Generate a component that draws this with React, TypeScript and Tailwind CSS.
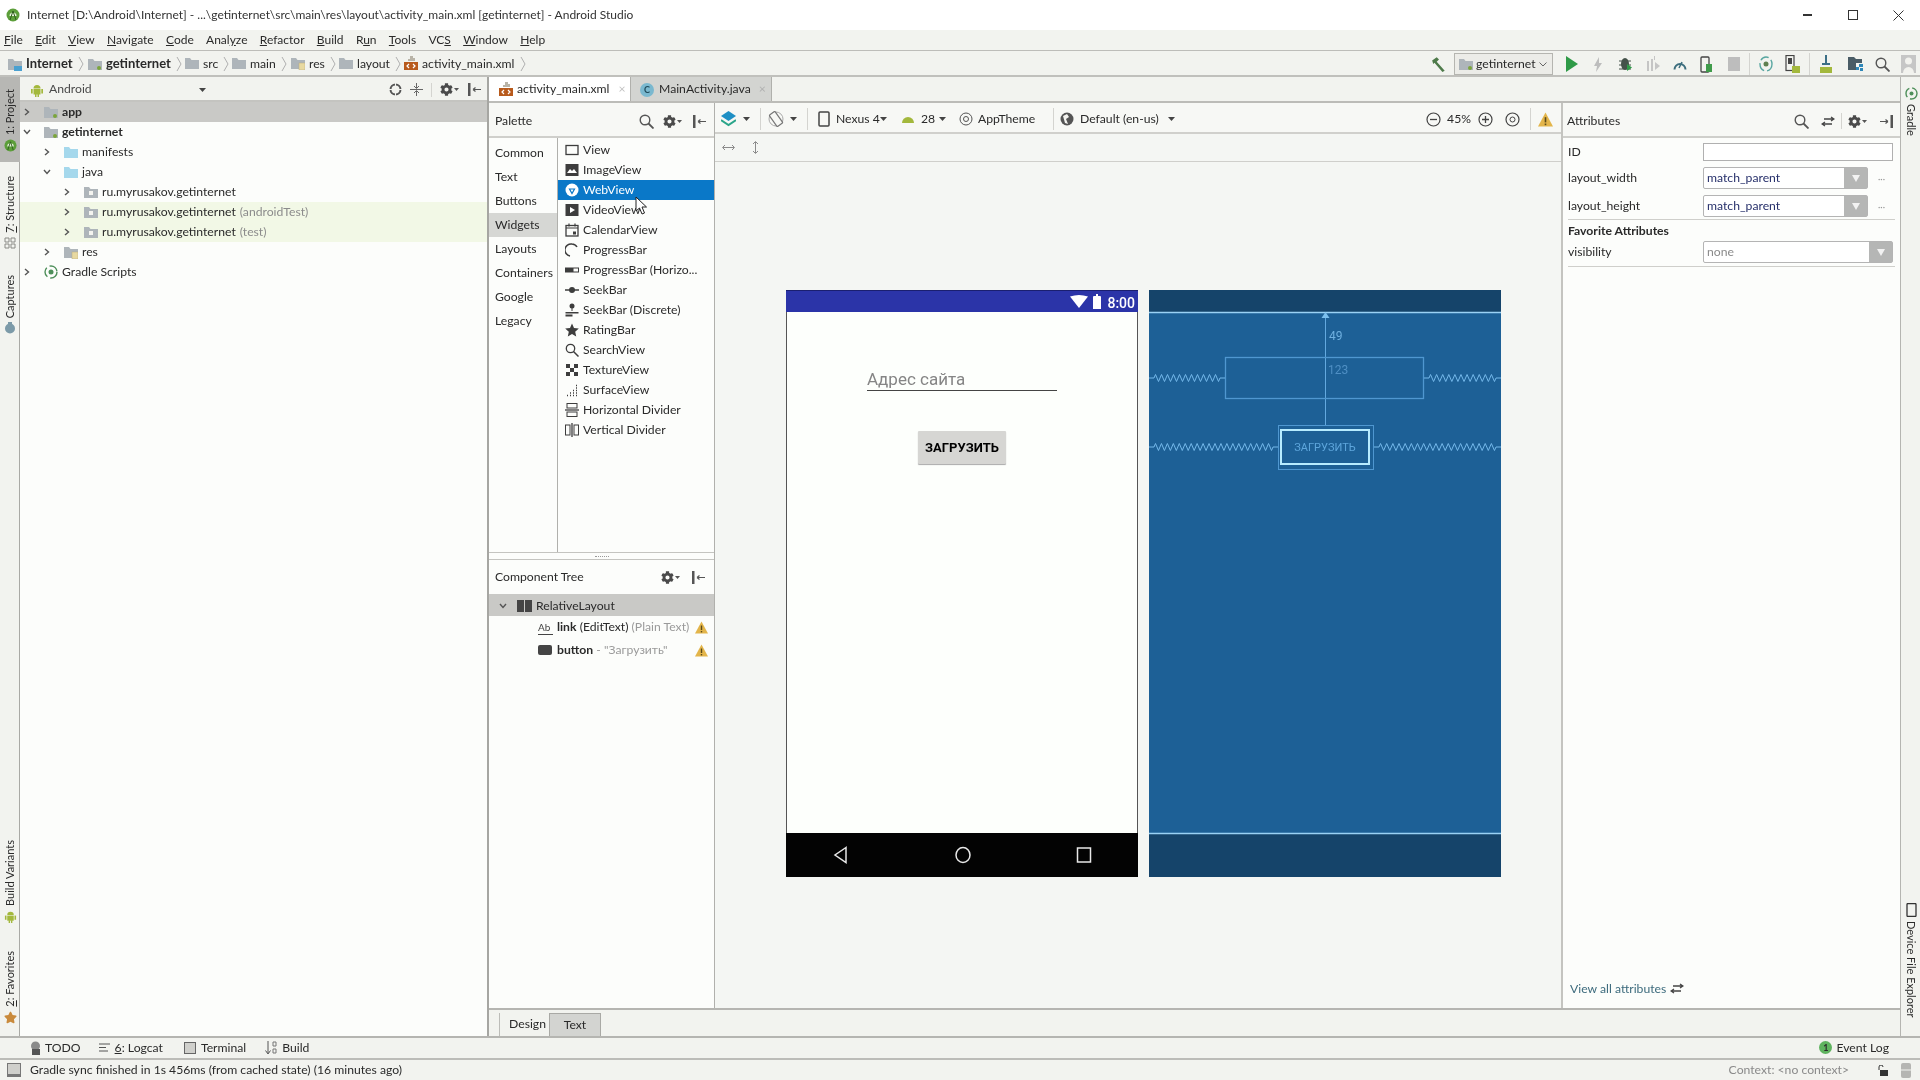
import type { ReactNode } from 'react'
import { FaCog, FaStar } from 'react-icons/fa'

const Logo = ({ size = 14 }: { size?: number }) => (
  <svg width={size} height={size} viewBox="0 0 14 14">
    <circle cx="7" cy="7" r="6.5" fill="#5c9e3a" />
    <path d="M3.5 8a3.5 3.5 0 0 1 7 0z" fill="#e8f3dd" />
    <path d="M4 12l3-9 3 9" stroke="#2f5f1e" strokeWidth="1" fill="none" />
  </svg>
)

const Magnifier = ({ size = 15 }: { size?: number }) => (
  <svg width={size} height={size} viewBox="0 0 15 15" className="shrink-0">
    <circle cx="6" cy="6" r="4.800" fill="none" stroke="#555" strokeWidth="1.400" />
    <path d="M9.500 9.500l5 5" stroke="#555" strokeWidth="1.800" />
  </svg>
)

const Folder = ({ kind = 'gray' }: { kind?: 'gray' | 'blue' | 'module' | 'pkg' | 'res' | 'root' }) => {
  const fill = kind === 'blue' ? '#a5d8ec' : '#aeb5ba'
  return (
    <svg width="14" height="13" viewBox="0 0 14 13" className="shrink-0">
      <path d="M0 1h5l1.5 2H14v9H0z" fill={fill} />
      {kind === 'pkg' && <rect x="5" y="5" width="4" height="4" fill="#f4f4f0" />}
      {kind === 'module' && <rect x="9" y="8" width="4" height="4" rx="2" fill="#7ba53c" />}
      {kind === 'res' && <rect x="8" y="6" width="6" height="7" fill="#e8d9a0" stroke="#b8ab80" strokeWidth="0.5" />}
      {kind === 'root' && <path d="M6 8h8v5H6z" fill="#4aa0d0" />}
    </svg>
  )
}

const XmlIcon = () => (
  <svg width="14" height="15" viewBox="0 0 14 15" className="shrink-0">
    <path d="M6 0h3v2h2v3H4V3h2z" fill="#b9b4a8" />
    <rect x="0" y="6" width="14" height="8" fill="#b85a1c" />
    <path d="M5 8l-2 2 2 2M9 8l2 2-2 2" stroke="#fff" strokeWidth="1.2" fill="none" />
  </svg>
)

const Robot = ({ size = 14, className = '' }: { size?: number; className?: string }) => (
  <svg width={size} height={size} viewBox="0 0 14 14" className={className}>
    <path d="M3.5 5.5a3.5 3.5 0 0 1 7 0z" fill="#a3b83c" />
    <rect x="3.5" y="6" width="7" height="5.5" fill="#a3b83c" />
    <rect x="1" y="6" width="1.7" height="4.5" fill="#a3b83c" />
    <rect x="11.3" y="6" width="1.7" height="4.5" fill="#a3b83c" />
    <rect x="5" y="11" width="1.5" height="3" fill="#a3b83c" />
    <rect x="7.5" y="11" width="1.5" height="3" fill="#a3b83c" />
  </svg>
)

const Gear = () => (
  <span className="flex items-center gap-[1px]">
    <FaCog size={13} color="#4a4a4a" />
    <svg width="5" height="3" viewBox="0 0 5 3"><path d="M0 0h5L2.500 3z" fill="#555" /></svg>
  </span>
)

const Caret = ({ className = '' }: { className?: string }) => (
  <svg width="7" height="4" viewBox="0 0 7 4" className={className}><path d="M0 0h7L3.500 4z" fill="#444" /></svg>
)

const Hide = () => (
  <svg width="13" height="13" viewBox="0 0 13 13">
    <rect x="0" y="0" width="2.500" height="13" fill="#555" />
    <path d="M5 6.500h8M5 6.500l2.500-2M5 6.500l2.500 2" stroke="#555" strokeWidth="1.200" fill="none" />
  </svg>
)

const Chevron = ({ open = false }: { open?: boolean }) => (
  <svg width="8" height="8" viewBox="0 0 8 8" className="shrink-0">
    <path d={open ? 'M1 2l3 3.500L7 2' : 'M2 1l3.500 3L2 7'} stroke="#555" strokeWidth="1.400" fill="none" />
  </svg>
)

const Warn = ({ size = 13 }: { size?: number }) => (
  <svg width={size} height={size} viewBox="0 0 13 13">
    <path d="M6.500 0.500L13 12.500H0z" fill="#e3b54a" />
    <rect x="5.800" y="4.500" width="1.400" height="4.500" fill="#5a4a1a" />
    <rect x="5.800" y="10" width="1.400" height="1.400" fill="#5a4a1a" />
  </svg>
)

const Swap = () => (
  <svg width="14" height="11" viewBox="0 0 14 11">
    <path d="M3 3h9M10 1l3 2-3 2M11 8H2M4 6L1 8l3 2" stroke="#444" strokeWidth="1.300" fill="none" />
  </svg>
)

const Crumb = ({ icon, label, bold, w }: { icon: ReactNode; label: string; bold?: boolean; w: number }) => (
  <div className="flex items-center shrink-0" style={{ width: w }}>
    {icon}
    <span className={`ml-[4px] ${bold ? 'font-bold text-[13px]' : ''}`}>{label}</span>
    <svg width="6" height="16" viewBox="0 0 6 16" className="ml-[5px]">
      <path d="M1 1l4 7-4 7" stroke="#b0b0b0" fill="none" />
    </svg>
  </div>
)

const MENU: [string, string, string][] = [
  ['', 'F', 'ile'], ['', 'E', 'dit'], ['', 'V', 'iew'], ['', 'N', 'avigate'], ['', 'C', 'ode'],
  ['Anal', 'y', 'ze'], ['', 'R', 'efactor'], ['', 'B', 'uild'], ['R', 'u', 'n'], ['', 'T', 'ools'],
  ['VC', 'S', ''], ['', 'W', 'indow'], ['', 'H', 'elp'],
]

const TREE = [
  { depth: 0, label: 'app', bold: true, icon: 'module', selected: true },
  { depth: 0, label: 'getinternet', bold: true, icon: 'module', open: true },
  { depth: 1, label: 'manifests', icon: 'blue' },
  { depth: 1, label: 'java', icon: 'blue', open: true },
  { depth: 2, label: 'ru.myrusakov.getinternet', icon: 'pkg' },
  { depth: 2, label: 'ru.myrusakov.getinternet', icon: 'pkg', note: '(androidTest)', tint: true },
  { depth: 2, label: 'ru.myrusakov.getinternet', icon: 'pkg', note: '(test)', tint: true },
  { depth: 1, label: 'res', icon: 'res' },
  { depth: 0, label: 'Gradle Scripts', icon: 'gradle' },
]

const GROUPS = ['Common', 'Text', 'Buttons', 'Widgets', 'Layouts', 'Containers', 'Google', 'Legacy']

const PALETTE_ICONS: Record<string, ReactNode> = {
  View: <rect x="1" y="2.500" width="12" height="9" fill="none" stroke="currentColor" strokeWidth="1.300" />,
  ImageView: (
    <>
      <rect x="0.500" y="1" width="13" height="12" fill="currentColor" />
      <path d="M2 10l3-4 2 2 2-2 3 4z" fill="#fff" />
    </>
  ),
  WebView: (
    <>
      <circle cx="7" cy="7" r="6.500" fill="currentColor" />
      <path d="M4.500 6h5L7 10.500z" fill="none" stroke="#0a78c8" strokeWidth="1.200" />
    </>
  ),
  VideoView: (
    <>
      <rect x="0.500" y="1" width="13" height="12" fill="currentColor" />
      <path d="M5 4l5 3-5 3z" fill="#fff" />
    </>
  ),
  CalendarView: (
    <>
      <rect x="1" y="2.500" width="12" height="10.500" fill="none" stroke="currentColor" strokeWidth="1.300" />
      <path d="M4 0.500v3M10 0.500v3M1 5h12" stroke="currentColor" strokeWidth="1.200" />
      <rect x="8" y="8.500" width="3" height="3" fill="currentColor" />
    </>
  ),
  ProgressBar: <path d="M5 13A6 6 0 0 1 7 1a6 6 0 0 1 5 3" fill="none" stroke="currentColor" strokeWidth="1.500" />,
  Horizontal: (
    <>
      <rect x="0.500" y="5" width="13" height="4" fill="none" stroke="currentColor" />
      <rect x="0.500" y="5" width="8" height="4" fill="currentColor" />
    </>
  ),
  SeekBar: (
    <>
      <path d="M0 7h14" stroke="currentColor" strokeWidth="1.500" />
      <circle cx="7" cy="7" r="3" fill="currentColor" />
    </>
  ),
  Discrete: (
    <>
      <circle cx="7" cy="3" r="2.500" fill="currentColor" />
      <path d="M7 5v3" stroke="currentColor" />
      <rect x="0.500" y="9" width="13" height="1.500" fill="currentColor" />
      <rect x="0.500" y="11.500" width="7" height="2" fill="currentColor" />
    </>
  ),
  RatingBar: <path d="M7 0.500l2 4.500 4.800 0.500-3.600 3.200 1 4.800L7 11l-4.200 2.500 1-4.800L0.200 5.500 5 5z" fill="currentColor" />,
  SearchView: (
    <>
      <circle cx="5.500" cy="5.500" r="4.200" fill="none" stroke="currentColor" strokeWidth="1.300" />
      <path d="M8.500 8.500l5 5" stroke="currentColor" strokeWidth="1.500" />
    </>
  ),
  TextureView: (
    <>
      <rect x="1" y="1" width="4" height="4" fill="currentColor" />
      <rect x="9" y="1" width="4" height="4" fill="currentColor" />
      <rect x="5" y="5" width="4" height="4" fill="currentColor" />
      <rect x="1" y="9" width="4" height="4" fill="currentColor" />
      <rect x="9" y="9" width="4" height="4" fill="currentColor" />
    </>
  ),
  SurfaceView: <path d="M2 12.500h1M5 12.500h1M8 12.500h1M11 12.500h1M5 10h1M8 10h1M11 10h1M8 7.500h1M11 7.500h1M11 5h1M11 2.500h1" stroke="currentColor" strokeWidth="1.500" />,
  HDivider: (
    <>
      <rect x="2" y="0.500" width="10" height="4.500" fill="none" stroke="currentColor" />
      <path d="M0 7h14" stroke="currentColor" strokeWidth="1.300" />
      <rect x="2" y="9" width="10" height="4.500" fill="none" stroke="currentColor" />
    </>
  ),
  VDivider: (
    <>
      <rect x="0.500" y="2" width="4.500" height="10" fill="none" stroke="currentColor" />
      <path d="M7 0v14" stroke="currentColor" strokeWidth="1.300" />
      <rect x="9" y="2" width="4.500" height="10" fill="none" stroke="currentColor" />
    </>
  ),
}

const WIDGETS = [
  ['View', 'View'], ['ImageView', 'ImageView'], ['WebView', 'WebView'], ['VideoView', 'VideoView'],
  ['CalendarView', 'CalendarView'], ['ProgressBar', 'ProgressBar'], ['Horizontal', 'ProgressBar (Horizo...'],
  ['SeekBar', 'SeekBar'], ['Discrete', 'SeekBar (Discrete)'], ['RatingBar', 'RatingBar'],
  ['SearchView', 'SearchView'], ['TextureView', 'TextureView'], ['SurfaceView', 'SurfaceView'],
  ['HDivider', 'Horizontal Divider'], ['VDivider', 'Vertical Divider'],
]

const Side = ({ label, icon, flip = true, className = '' }: { label: ReactNode; icon: ReactNode; flip?: boolean; className?: string }) => (
  <div className={`flex flex-col items-center w-[20px] text-[11px] ${className}`}>
    {flip ? (
      <>
        <span className="[writing-mode:vertical-rl] rotate-180 leading-[20px] whitespace-nowrap">{label}</span>
        <span className="mt-[4px]">{icon}</span>
      </>
    ) : (
      <>
        <span className="mb-[4px]">{icon}</span>
        <span className="[writing-mode:vertical-rl] leading-[20px] whitespace-nowrap">{label}</span>
      </>
    )}
  </div>
)

const Box = ({ w = 27, children }: { w?: number; children: ReactNode }) => (
  <div className="flex justify-center items-center shrink-0" style={{ width: w }}>{children}</div>
)

const Sep = ({ className = '' }: { className?: string }) => <div className={`w-px h-[22px] bg-[#d4d4d0] shrink-0 ${className}`} />

// zigzag between two straight stubs
const spring = (x1: number, x2: number, y: number) => {
  const pts: string[] = [`${x1},${y}`, `${x1 + 5},${y}`]
  const span = x2 - x1 - 10
  const n = Math.round(span / 3) & ~1
  for (let i = 0; i < n; i++) pts.push(`${x1 + 5 + ((i + 0.500) * span) / n},${y + (i % 2 ? 3.500 : -3.500)}`)
  pts.push(`${x2 - 5},${y}`, `${x2},${y}`)
  return pts.join(' ')
}

const Blueprint = () => (
  <svg width="352" height="587" viewBox="0 0 352 587" className="shrink-0 block">
    <rect width="352" height="587" fill="#1d6096" />
    <rect width="352" height="22" fill="#15446a" />
    <rect y="543" width="352" height="44" fill="#15446a" />
    <path d="M0 22.500h352M0 543.500h352" stroke="#9ad2f5" strokeWidth="1.500" />
    <path d="M176.500 24v111" stroke="#63a9df" />
    <path d="M176.500 22l-4 6h8z" fill="#7cc0ee" />
    <rect x="76.500" y="67.500" width="198" height="41" fill="none" stroke="#4f97d0" strokeWidth="1.300" />
    <rect x="129.500" y="135.500" width="95" height="44" fill="none" stroke="#4f97d0" />
    <rect x="132" y="140" width="88" height="34" fill="none" stroke="#b7ecff" strokeWidth="2" />
    <polyline points={spring(0, 76, 88)} fill="none" stroke="#74b8ea" />
    <polyline points={spring(275, 352, 88)} fill="none" stroke="#74b8ea" />
    <polyline points={spring(0, 129, 157)} fill="none" stroke="#74b8ea" />
    <polyline points={spring(225, 352, 157)} fill="none" stroke="#74b8ea" />
    <text x="180" y="50" fontSize="12" fill="#6fb0e0" fontFamily="Roboto, sans-serif">49</text>
    <text x="179" y="84" fontSize="12" fill="#4f8fc4" fontFamily="Roboto, sans-serif">123</text>
    <text x="176" y="161" fontSize="11" textAnchor="middle" fill="#5ea6dc" fontFamily="Roboto, sans-serif">ЗАГРУЗИТЬ</text>
  </svg>
)

const Phone = () => (
  <div className="w-[352px] h-[587px] flex flex-col shrink-0 font-['Roboto',sans-serif]">
    <div className="h-[22px] bg-[#2b34a8] border-t border-[#1a1f70] flex items-center justify-end pr-[3px] text-white">
      <svg width="18" height="13" viewBox="0 0 18 13" className="mr-[4px]"><path d="M0 1.500Q9-1.500 18 1.500L9 13z" fill="#fff" /></svg>
      <svg width="10" height="15" viewBox="0 0 10 15" className="mr-[5px]"><path d="M2 2h2V0h2v2h2a1 1 0 0 1 1 1v12H1V3a1 1 0 0 1 1-1z" fill="#fff" /></svg>
      <span className="text-[14px] font-medium leading-none mt-[2px]">8:00</span>
    </div>
    <div className="flex-1 bg-[#fdfffc] border-x border-[#555] flex flex-col items-center">
      <div className="w-[190px] mt-[56px] h-[23px] border-b border-[#444] text-[17px] leading-[22px] text-[#858585]">Адрес сайта</div>
      <div className="mt-[40px] w-[88px] h-[33px] bg-[#d6d6d3] shadow-[0_1px_1px_#aaa] flex items-center justify-center text-[13px] font-bold text-black rounded-[1px]">ЗАГРУЗИТЬ</div>
    </div>
    <div className="h-[44px] bg-[#030303] flex items-center justify-between pl-[47px] pr-[46px]">
      <svg width="16" height="18" viewBox="0 0 16 18"><path d="M13 1.500L2 9l11 7.500z" fill="none" stroke="#e8e8e8" strokeWidth="1.500" /></svg>
      <svg width="16" height="18" viewBox="0 0 16 18"><ellipse cx="8" cy="9" rx="7" ry="7.500" fill="none" stroke="#e8e8e8" strokeWidth="1.500" /></svg>
      <svg width="16" height="18" viewBox="0 0 16 18"><rect x="1.500" y="2" width="13" height="14" fill="none" stroke="#e8e8e8" strokeWidth="1.500" /></svg>
    </div>
  </div>
)

const Select = ({ value, dim, wide }: { value: string; dim?: boolean; wide?: boolean }) => (
  <div className={`h-[22px] flex border border-[#b4b4b4] rounded-[2px] bg-white ${wide ? 'w-[190px]' : 'w-[165px]'}`}>
    <div className={`flex-1 pl-[3px] leading-[20px] ${dim ? 'text-[#8a8a8a]' : 'text-[#27306b]'}`}>{value}</div>
    <div className="w-[23px] bg-[#b5b6b5] flex items-center justify-center">
      <svg width="8" height="8" viewBox="0 0 8 8"><path d="M0 1h8L4 8z" fill="#f2f2f2" /></svg>
    </div>
  </div>
)

const Field = ({ label, children }: { label: string; children: ReactNode }) => (
  <div className="flex items-center">
    <span className="w-[140px] shrink-0 pl-[5px]">{label}</span>
    {children}
  </div>
)

export default function App() {
  return (
    <div className="w-[1920px] h-[1080px] overflow-hidden flex flex-col bg-[#f2f3ef] text-[12.2px] text-[#2a2a2a] font-['Lato',sans-serif] blur-[0.35px]">
      {/* window title */}
      <div className="h-[30px] bg-white flex items-center pl-[6px] text-[#333] text-[12px]">
        <Logo />
        <span className="ml-[7px] whitespace-nowrap">Internet [D:\Android\Internet] - ...\getinternet\src\main\res\layout\activity_main.xml [getinternet] - Android Studio</span>
        <div className="ml-auto flex items-center">
          <Box w={46}><div className="w-[9px] h-[1.500px] bg-[#333]" /></Box>
          <Box w={46}><div className="w-[10px] h-[10px] border border-[#333]" /></Box>
          <Box w={44}>
            <svg width="11" height="11" viewBox="0 0 11 11"><path d="M0.500 0.500l10 10M10.500 0.500l-10 10" stroke="#333" /></svg>
          </Box>
        </div>
      </div>

      {/* menu */}
      <div className="h-[21px] flex items-center gap-[12.3px] pl-[4px] border-b border-[#bdbdb9] text-[12px]">
        {MENU.map(([a, m, b]) => (
          <span key={a + m + b}>{a}<span className="underline">{m}</span>{b}</span>
        ))}
      </div>

      {/* navigation bar */}
      <div className="h-[26px] flex items-center pl-[8px] pt-[2px] border-b-2 border-[#c0c0bc] shrink-0">
        <Crumb bold w={80} label="Internet" icon={<Folder kind="root" />} />
        <Crumb bold w={97} label="getinternet" icon={<Folder kind="module" />} />
        <Crumb w={47} label="src" icon={<Folder />} />
        <Crumb w={59} label="main" icon={<Folder />} />
        <Crumb w={48} label="res" icon={<Folder kind="res" />} />
        <Crumb w={65} label="layout" icon={<Folder />} />
        <Crumb w={125} label="activity_main.xml" icon={<XmlIcon />} />
        <div className="ml-auto flex items-center">
          <Box>
            <svg width="16" height="16" viewBox="0 0 14 14"><path d="M1 4l4-3 2 2-2 2 7 8-2 1-7-8-1 1z" fill="#4e7a4a" /></svg>
          </Box>
          <div className="ml-[2px] w-[99px] h-[22px] border border-[#b5b5b0] bg-[#ecece8] flex items-center pl-[4px] gap-[3px]">
            <Folder kind="module" />
            <span>getinternet</span>
            <svg width="8" height="5" viewBox="0 0 8 5"><path d="M0.500 0.500L4 4l3.500-3.500" stroke="#666" fill="none" /></svg>
          </div>
          <div className="ml-[5px] flex">
            <Box><svg width="12" height="16" viewBox="0 0 12 16"><path d="M0 0l12 8-12 8z" fill="#2f9a47" /></svg></Box>
            <Box><svg width="9" height="15" viewBox="0 0 9 15"><path d="M5 0L0 9h3l-1 6 6-9H5z" fill="#bdbdbd" /></svg></Box>
            <Box><svg width="14" height="16" viewBox="0 0 14 16"><ellipse cx="6" cy="8" rx="4" ry="6" fill="#44524a" /><path d="M0 5h12M0 9h12M0 13h12" stroke="#44524a" /><path d="M8 8l5 3.500-5 3.500z" fill="#2f9a47" /></svg></Box>
            <Box><svg width="14" height="16" viewBox="0 0 14 16"><path d="M1 5h2v10H1zM5 3h2v12H5zM8 0h1v4H8z" fill="#c5c5c5" /><path d="M9 6l5 4-5 4z" fill="#c5c5c5" /></svg></Box>
            <Box><svg width="14" height="11" viewBox="0 0 14 11"><path d="M1.500 10.500a5.500 5.500 0 1 1 11 0" stroke="#3d6e7e" strokeWidth="2" fill="none" /><path d="M6 9l3-6" stroke="#3d6e7e" strokeWidth="1.500" /></svg></Box>
            <Box><svg width="13" height="17" viewBox="0 0 13 17"><rect x="1" y="1" width="8" height="15" rx="1" fill="none" stroke="#444" strokeWidth="1.300" /><rect x="6" y="8" width="6" height="8" fill="#3f9b4a" /></svg></Box>
            <Box><div className="w-[12px] h-[14px] bg-[#bdbdbd]" /></Box>
          </div>
          <Sep className="ml-[2px]" />
          <div className="ml-[2px] flex">
            <Box><svg width="14" height="18" viewBox="0 0 14 18"><ellipse cx="7" cy="9" rx="6" ry="7" fill="none" stroke="#58a6a0" strokeWidth="1.400" strokeDasharray="9 3" /><circle cx="7" cy="9" r="2.500" fill="#5f7f4f" /></svg></Box>
            <Box><svg width="15" height="18" viewBox="0 0 15 18"><rect x="1" y="0.500" width="8" height="15" fill="none" stroke="#444" strokeWidth="1.200" /><rect x="3" y="3" width="4" height="6" fill="#444" /><rect x="7" y="11" width="8" height="7" fill="#a3b83c" /></svg></Box>
          </div>
          <Sep className="ml-[3px]" />
          <div className="ml-[2px] flex">
            <Box><svg width="16" height="18" viewBox="0 0 16 18"><path d="M7 0h2v8h3v2H4V8h3z" fill="#3c6f86" /><rect x="2" y="12" width="12" height="6" fill="#a3b83c" /></svg></Box>
            <div className="w-[3px]" />
            <Box><svg width="16" height="14" viewBox="0 0 16 14"><path d="M0 0h6l2 2h6v4H8v7H0z" fill="#4a5c66" /><path d="M11 7h4v3h-4zM8 10h3v3H8zM12 11h3v3h-3z" fill="#2f87b8" /></svg></Box>
            <Box><Magnifier /></Box>
            <Box w={24}><svg width="15" height="18" viewBox="0 0 15 18"><rect width="15" height="18" fill="#c6c6c6" /><circle cx="7.500" cy="6" r="3.500" fill="#f2f2ee" /><path d="M2 18a5.500 6 0 0 1 11 0z" fill="#f2f2ee" /></svg></Box>
          </div>
        </div>
      </div>

      {/* body */}
      <div className="flex-1 flex min-h-0">
        {/* left tool stripe */}
        <div className="w-[20px] border-r border-[#a9a9a5] flex flex-col shrink-0">
          <Side className="bg-[#b7b7b4] h-[85px] pt-[12px]" label="1: Project" icon={<Logo size={13} />} />
          <Side className="mt-[14px]" label={<><span className="underline">7</span>: Structure</>} icon={
            <svg width="12" height="12" viewBox="0 0 12 12"><path d="M1 1h4v4H1zM7 1h4v4H7zM1 7h4v4H1zM7 7h4v4H7z" fill="none" stroke="#8a8a86" /></svg>
          } />
          <Side className="mt-[26px]" label="Captures" icon={
            <svg width="12" height="12" viewBox="0 0 12 12"><circle cx="6" cy="6.500" r="5" fill="#7c9aa8" /><rect x="4" y="0" width="4" height="2" fill="#7c9aa8" /></svg>
          } />
          <div className="flex-1" />
          <Side label="Build Variants" icon={<Robot size={13} />} />
          <Side className="mt-[28px] mb-[12px]" label={<><span className="underline">2</span>: Favorites</>} icon={<FaStar size={13} color="#c98a3c" />} />
        </div>

        {/* project pane */}
        <div className="w-[469px] shrink-0 bg-[#fcfdfb] border-r-2 border-[#a6a6a2] flex flex-col">
          <div className="h-[25px] bg-[#f2f3ef] border-b-2 border-[#c4c4c0] flex items-center pl-[10px] pt-[2px] shrink-0">
            <Robot />
            <span className="ml-[5px] text-[#4a4a4a]">Android</span>
            <Caret className="ml-[107px]" />
            <div className="ml-auto flex items-center pr-[6px]">
              <svg width="13" height="13" viewBox="0 0 13 13" className="mr-[8px]"><circle cx="6.500" cy="6.500" r="5" fill="none" stroke="#555" strokeWidth="2" /><path d="M6.500 0v13M0 6.500h13" stroke="#f2f3ef" /></svg>
              <svg width="13" height="13" viewBox="0 0 13 13"><path d="M6.500 0v5M4 3l2.500 2.500L9 3M6.500 13V8M4 10l2.500-2.500L9 10M0 6.500h13" stroke="#666" fill="none" /></svg>
              <Sep className="h-[14px]! mx-[8px]" />
              <Gear />
              <div className="ml-[9px]"><Hide /></div>
            </div>
          </div>
          {TREE.map((row, i) => (
            <div key={i} className={`h-[20px] flex items-center shrink-0 ${row.selected ? 'bg-[#c9c9c6]' : row.tint ? 'bg-[#f2f8e6]' : ''}`} style={{ paddingLeft: 3 + row.depth * 20 }}>
              <span className="w-[8px]"><Chevron open={row.open} /></span>
              <span className="ml-[13px]">
                {row.icon === 'gradle' ? (
                  <svg width="14" height="14" viewBox="0 0 14 14"><circle cx="7" cy="7" r="6" fill="none" stroke="#4e8f5a" strokeWidth="1.400" strokeDasharray="10 3" /><circle cx="7" cy="7" r="2.500" fill="#4e8f5a" /></svg>
                ) : (
                  <Folder kind={row.icon as 'gray'} />
                )}
              </span>
              <span className={`ml-[4px] ${row.bold ? 'font-bold' : ''}`}>{row.label}</span>
              {row.note && <span className="ml-[4px] text-[#8c8c8c]">{row.note}</span>}
            </div>
          ))}
        </div>

        {/* editor */}
        <div className="flex-1 min-w-0 flex flex-col relative">
          {/* file tabs */}
          <div className="h-[26px] flex border-b-2 border-[#bcbcb8] shrink-0">
            <div className="w-[141px] h-[24px] bg-white flex items-center pl-[10px] pt-[1px]">
              <XmlIcon />
              <span className="ml-[4px]">activity_main.xml</span>
              <span className="ml-[9px] text-[#c2c2c2]">×</span>
            </div>
            <div className="w-[142px] h-[24px] bg-[#d3d4d1] border-x border-[#b0b0ac] flex items-center pl-[9px] pt-[1px]">
              <span className="w-[14px] h-[14px] rounded-full bg-[#7ab8cf] flex items-center justify-center text-[9px] font-bold text-[#1f4a5a]">C</span>
              <span className="ml-[5px]">MainActivity.java</span>
              <span className="ml-[8px] text-[#b0b0b0]">×</span>
            </div>
          </div>

          <div className="flex-1 flex min-h-0">
            {/* palette and component tree */}
            <div className="w-[226px] shrink-0 bg-[#fcfdfb] border-r border-[#b0b0ac] flex flex-col">
              <div className="h-[35px] border-b-2 border-[#cfcfcb] bg-[#f7f8f5] flex items-center pl-[6px] pt-[3px] shrink-0">
                <span>Palette</span>
                <div className="ml-auto flex items-center pr-[8px]">
                  <Magnifier />
                  <div className="ml-[9px]"><Gear /></div>
                  <div className="ml-[11px]"><Hide /></div>
                </div>
              </div>
              <div className="h-[414px] flex shrink-0">
                <div className="w-[69px] border-r border-[#b0b0ac] pt-[3px] shrink-0">
                  {GROUPS.map(g => (
                    <div key={g} className={`h-[24px] flex items-center pl-[6px] ${g === 'Widgets' ? 'bg-[#d6d7d4]' : ''}`}>{g}</div>
                  ))}
                </div>
                <div className="flex-1 pt-[2px]">
                  {WIDGETS.map(([key, label]) => {
                    const sel = key === 'WebView'
                    return (
                      <div key={key} className={`h-[20px] flex items-center pl-[7px] ${sel ? 'bg-[#0a78c8] text-white' : ''}`}>
                        <svg width="14" height="14" viewBox="0 0 14 14" className={`shrink-0 ${sel ? 'text-white' : 'text-[#3d3d3d]'}`}>{PALETTE_ICONS[key]}</svg>
                        <span className="ml-[4px] whitespace-nowrap">{label}</span>
                      </div>
                    )
                  })}
                </div>
              </div>
              <div className="h-[8px] border-y border-[#c4c4c0] flex justify-center items-center shrink-0">
                <div className="w-[14px] border-t border-dotted border-[#999]" />
              </div>
              <div className="h-[34px] flex items-center pl-[6px] shrink-0">
                <span>Component Tree</span>
                <div className="ml-auto flex items-center pr-[9px]">
                  <Gear />
                  <div className="ml-[12px]"><Hide /></div>
                </div>
              </div>
              <div className="h-[22px] bg-[#c9c9c6] flex items-center pl-[10px] pt-[2px] shrink-0">
                <Chevron open />
                <svg width="15" height="12" viewBox="0 0 15 12" className="ml-[10px]"><rect width="7" height="12" fill="#444" /><rect x="8" width="7" height="12" fill="#444" /></svg>
                <span className="ml-[4px]">RelativeLayout</span>
              </div>
              <div className="h-[23px] flex items-center pl-[49px]">
                <svg width="15" height="14" viewBox="0 0 15 14" className="shrink-0"><path d="M0 13.500h15" stroke="#444" /><text x="0" y="9.500" fontSize="10" fill="#444" fontFamily="Lato, sans-serif">Ab</text></svg>
                <span className="ml-[4px] whitespace-nowrap"><b>link</b> (EditText) <span className="text-[#9a9a9a]">(Plain Text)</span></span>
                <span className="ml-auto mr-[6px]"><Warn /></span>
              </div>
              <div className="h-[22px] flex items-center pl-[49px]">
                <div className="w-[14px] h-[10px] rounded-[2px] bg-[#444]" />
                <span className="ml-[5px]"><b>button</b> <span className="text-[#9a9a9a]">- "Загрузить"</span></span>
                <span className="ml-auto mr-[6px]"><Warn /></span>
              </div>
            </div>

            {/* design surface */}
            <div className="w-[846px] shrink-0 flex flex-col bg-[#f4f6f3]">
              <div className="h-[31px] bg-[#f7f8f5] border-b-2 border-[#d0d0cc] flex items-center pl-[6px] pt-[3px] shrink-0">
                <svg width="15" height="16" viewBox="0 0 15 16"><path d="M7.500 0L15 5l-7.500 5L0 5z" fill="#1e8fc4" /><path d="M0 9l7.500 5L15 9" stroke="#2ba58a" strokeWidth="2" fill="none" /></svg>
                <Caret className="ml-[7px]" />
                <Sep className="ml-[10px]" />
                <svg width="16" height="16" viewBox="0 0 16 16" className="ml-[7px]"><circle cx="8" cy="8" r="7" fill="none" stroke="#aaa" /><rect x="4.500" y="1" width="7" height="14" rx="1" transform="rotate(-35 8 8)" fill="#f7f8f5" stroke="#777" strokeWidth="1.200" /></svg>
                <Caret className="ml-[6px]" />
                <Sep className="ml-[10px]" />
                <svg width="12" height="16" viewBox="0 0 12 16" className="ml-[10px]"><rect x="1" y="1" width="10" height="14" rx="1" fill="none" stroke="#444" strokeWidth="1.500" /></svg>
                <span className="ml-[6px] w-[44px] whitespace-nowrap">Nexus 4</span>
                <Caret />
                <svg width="14" height="10" viewBox="0 0 14 10" className="ml-[14px]"><path d="M1 9a6 6 0 0 1 12 0z" fill="#a3b83c" /></svg>
                <span className="ml-[6px] w-[17px]">28</span>
                <Caret className="ml-[1px]" />
                <svg width="14" height="14" viewBox="0 0 14 14" className="ml-[13px]"><circle cx="7" cy="7" r="6" fill="none" stroke="#555" /><circle cx="7" cy="7" r="2.500" fill="none" stroke="#555" /></svg>
                <span className="ml-[5px] w-[60px]">AppTheme</span>
                <Sep className="ml-[15px]" />
                <svg width="14" height="14" viewBox="0 0 14 14" className="ml-[6px]"><circle cx="7" cy="7" r="6.500" fill="#555" /><path d="M3 4l4-2 2 3-3 2 2 5-3-1z" fill="#f4f4f0" /></svg>
                <span className="ml-[6px]">Default (en-us)</span>
                <Caret className="ml-[9px]" />
                <div className="ml-auto flex items-center pr-[8px]">
                  <svg width="15" height="15" viewBox="0 0 15 15"><circle cx="7.500" cy="7.500" r="6.500" fill="none" stroke="#444" strokeWidth="1.200" /><path d="M4 7.500h7" stroke="#444" strokeWidth="1.300" /></svg>
                  <span className="ml-[6px] mr-[7px]">45%</span>
                  <svg width="15" height="15" viewBox="0 0 15 15"><circle cx="7.500" cy="7.500" r="6.500" fill="none" stroke="#444" strokeWidth="1.200" /><path d="M4 7.500h7M7.500 4v7" stroke="#444" strokeWidth="1.300" /></svg>
                  <svg width="15" height="15" viewBox="0 0 15 15" className="ml-[12px]"><circle cx="7.500" cy="7.500" r="6.500" fill="none" stroke="#444" strokeWidth="1.200" /><circle cx="7.500" cy="7.500" r="2.500" fill="none" stroke="#444" /></svg>
                  <Sep className="ml-[10px] mr-[7px]" />
                  <Warn size={15} />
                </div>
              </div>
              <div className="h-[28px] border-b border-[#cfcfcb] flex items-center pl-[7px] gap-[17px] shrink-0">
                <svg width="13" height="7" viewBox="0 0 13 7"><path d="M1 3.500h11M3 1L0.500 3.500 3 6M10 1l2.500 2.500L10 6" stroke="#8a8a8a" fill="none" /></svg>
                <svg width="7" height="13" viewBox="0 0 7 13"><path d="M3.500 1v11M1 3l2.500-2.500L6 3M1 10l2.500 2.500L6 10" stroke="#8a8a8a" fill="none" /></svg>
              </div>
              <div className="flex-1 flex pt-[128px] pl-[71px] gap-[11px]">
                <Phone />
                <Blueprint />
              </div>
            </div>

            {/* attributes */}
            <div className="flex-1 min-w-0 bg-[#fcfdfb] border-l-2 border-[#c4c4c0] flex flex-col">
              <div className="h-[35px] border-b-2 border-[#cfcfcb] bg-[#f7f8f5] flex items-center pl-[4px] pt-[3px] shrink-0">
                <span>Attributes</span>
                <div className="ml-auto flex items-center pr-[7px]">
                  <Magnifier />
                  <div className="ml-[12px]"><Swap /></div>
                  <Sep className="h-[16px]! mx-[6px]" />
                  <Gear />
                  <div className="ml-[13px] rotate-180"><Hide /></div>
                </div>
              </div>
              <div className="flex flex-col pt-[5px] pr-[5px] flex-1">
                <Field label="ID"><div className="w-[190px] h-[18px] border border-[#b0b0b0] bg-white" /></Field>
                <div className="mt-[6px]">
                  <Field label="layout_width"><Select value="match_parent" /><span className="ml-[10px] text-[#999] text-[9px]">···</span></Field>
                </div>
                <div className="mt-[6px]">
                  <Field label="layout_height"><Select value="match_parent" /><span className="ml-[10px] text-[#999] text-[9px]">···</span></Field>
                </div>
                <div className="mt-[2px] ml-[5px] border-t border-[#cfcfcb] h-[22px] flex items-center font-bold">Favorite Attributes</div>
                <Field label="visibility"><Select wide dim value="none" /></Field>
                <div className="mt-[3px] ml-[5px] border-t border-[#cfcfcb]" />
                <div className="mt-auto mb-[10px] ml-[7px] flex items-center gap-[4px] text-[#3d6b7d]">
                  View all attributes <Swap />
                </div>
              </div>
            </div>
          </div>

          {/* design / text tabs */}
          <div className="h-[28px] border-t-2 border-[#b5b5b1] flex pl-[10px] pt-[3px] shrink-0">
            <div className="w-[50px] border-l border-[#bcbcb8] flex items-center justify-center pl-[6px]">Design</div>
            <div className="w-[52px] bg-[#d3d4d1] border border-b-0 border-[#a9a9a5] flex items-center justify-center">Text</div>
          </div>

          {/* cursor */}
          <svg width="13" height="19" viewBox="0 0 13 19" className="absolute left-[146px] top-[119px]">
            <path d="M1 1v14l3.500-3 2.500 6 2.500-1-2.500-6h4.500z" fill="#fff" stroke="#222" />
          </svg>
        </div>

        {/* right tool stripe */}
        <div className="w-[20px] border-l border-[#b5b5b1] flex flex-col shrink-0">
          <Side flip={false} className="mt-[10px]" label="Gradle" icon={
            <svg width="13" height="13" viewBox="0 0 13 13"><circle cx="6.500" cy="6.500" r="5.500" fill="none" stroke="#4e8f5a" strokeWidth="1.400" strokeDasharray="10 3" /><circle cx="6.500" cy="6.500" r="2" fill="#4e8f5a" /></svg>
          } />
          <div className="flex-1" />
          <Side flip={false} className="mb-[18px]" label="Device File Explorer" icon={
            <svg width="11" height="14" viewBox="0 0 11 14"><rect x="1" y="0.500" width="9" height="13" rx="1" fill="none" stroke="#333" strokeWidth="1.300" /></svg>
          } />
        </div>
      </div>

      {/* tool windows bar */}
      <div className="h-[22px] border-t-2 border-[#b5b5b1] flex items-center shrink-0">
        <div className="ml-[29px] flex items-center">
          <svg width="13" height="14" viewBox="0 0 13 14"><circle cx="6.500" cy="5" r="4.500" fill="#8a8a8a" /><rect x="3" y="8" width="8" height="6" fill="#555" /></svg>
          <span className="ml-[3px]">TODO</span>
        </div>
        <div className="ml-[18px] flex items-center">
          <svg width="11" height="9" viewBox="0 0 11 9"><path d="M0 1h11M0 4.500h7M0 8h9" stroke="#555" /></svg>
          <span className="ml-[5px]"><span className="underline">6</span>: Logcat</span>
        </div>
        <div className="ml-[21px] flex items-center">
          <svg width="12" height="12" viewBox="0 0 12 12"><rect x="0.500" y="0.500" width="11" height="11" fill="#d0d0cc" stroke="#666" /></svg>
          <span className="ml-[5px]">Terminal</span>
        </div>
        <div className="ml-[19px] flex items-center">
          <svg width="13" height="14" viewBox="0 0 13 14"><path d="M3 0v12M0.500 9.500L3 13l2.500-3.500" stroke="#555" fill="none" /><path d="M8 1h3v4H8zM8 8h3v4H8z" fill="none" stroke="#777" /></svg>
          <span className="ml-[4px]">Build</span>
        </div>
        <div className="ml-auto mr-[31px] flex items-center">
          <span className="w-[13px] h-[13px] rounded-full bg-[#5fb35f] text-[9px] font-bold flex items-center justify-center">1</span>
          <span className="ml-[4px]">Event Log</span>
        </div>
      </div>

      {/* status bar */}
      <div className="h-[22px] border-t-2 border-[#bcbcb8] flex items-center shrink-0">
        <div className="ml-[7px] w-[14px] h-[14px] border border-[#777] bg-[#cfcfcb] border-b-3" />
        <span className="ml-[9px]">Gradle sync finished in 1s 456ms (from cached state) (16 minutes ago)</span>
        <span className="ml-auto text-[#8a8a8a]">Context: &lt;no context&gt;</span>
        <svg width="11" height="11" viewBox="0 0 11 11" className="ml-[29px]"><rect x="2" y="5" width="8" height="6" fill="#333" /><path d="M1 5V2a2 2 0 0 1 4 0" stroke="#333" fill="none" /></svg>
        <svg width="12" height="15" viewBox="0 0 12 15" className="ml-[11px] mr-[8px]"><rect x="1" y="0" width="10" height="15" rx="2" fill="#b5b5b2" /><path d="M0 7h12" stroke="#f2f3ef" /></svg>
      </div>
    </div>
  )
}
